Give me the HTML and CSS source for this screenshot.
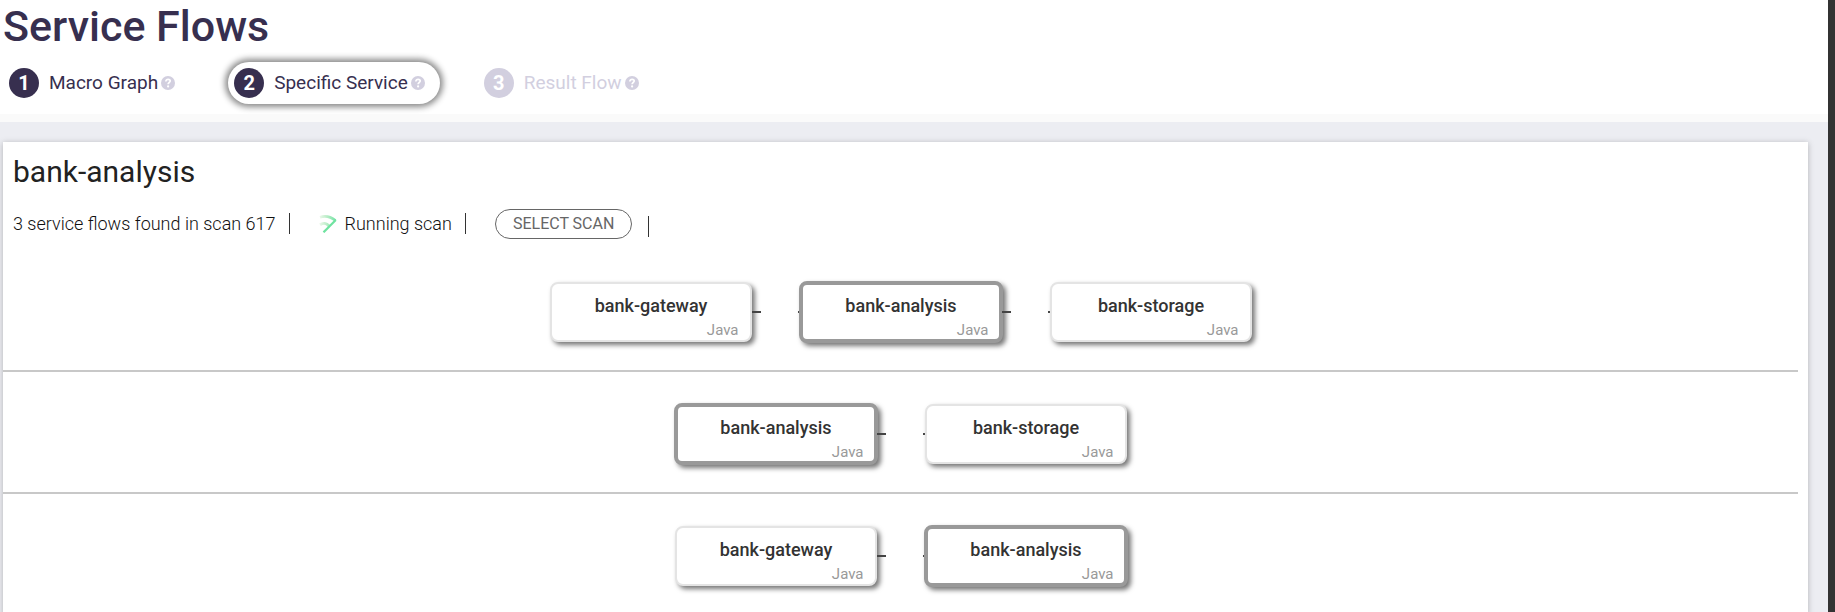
FILE: index.html
```html
<!DOCTYPE html>
<html lang="en">
<head>
<meta charset="utf-8">
<title>Service Flows</title>
<link rel="stylesheet" href="styles.css">
</head>
<body>
<svg class="defs" aria-hidden="true">
  <symbol id="help" viewBox="0 0 14 14">
    <circle cx="7" cy="7" r="7" fill="#d2cfdf"/>
    <path d="M4.9 5.4C4.9 4 5.8 3.3 7.1 3.3c1.2 0 2.1.7 2.1 1.8 0 1.4-2.1 1.5-2.1 3.1" fill="none" stroke="#fff" stroke-width="1.7"/>
    <circle cx="7.1" cy="10.4" r="1.1" fill="#fff"/>
  </symbol>
</svg>
<div class="app">
  <div class="page">
    <header class="header">
      <h1 class="title">Service Flows</h1>
      <nav class="steps">
        <button class="step" type="button"><span class="num">1</span><span>Macro Graph</span><svg class="help"><use href="#help"/></svg></button>
        <button class="step active" type="button"><span class="num">2</span><span>Specific Service</span><svg class="help"><use href="#help"/></svg></button>
        <button class="step disabled" type="button" disabled><span class="num">3</span><span>Result Flow</span><svg class="help"><use href="#help"/></svg></button>
      </nav>
    </header>
    <main class="card">
      <h2 class="service">bank-analysis</h2>
      <div class="toolbar">
        <span class="info">3 service flows found in scan 617</span>
        <span class="info running">
          <svg class="logo" viewBox="0 0 18 18" fill="none">
            <defs>
              <linearGradient id="fade" gradientUnits="userSpaceOnUse" x1="0" y1="0" x2="17" y2="0"><stop offset="0" stop-color="#8fd98f" stop-opacity=".15"/><stop offset="1" stop-color="#6fe3a6"/></linearGradient>
            </defs>
            <path d="M1 2.200C6 .6 12 2 16.500 5.500" stroke="url(#fade)" stroke-width="2.600"/>
            <path d="M1 9.800C4 7.600 7.500 8 10 11" stroke="url(#fade)" stroke-width="3"/>
            <path d="M16.800 5L4.500 17.300" stroke="#6fe3a0" stroke-width="2.200"/>
          </svg>
          Running scan
        </span>
        <button class="select" type="button">SELECT SCAN</button>
        <span class="bar"></span>
      </div>
      <ul class="flows">
        <li class="flow">
          <div class="node"><strong>bank-gateway</strong><span class="lang">Java</span></div>
          <span class="link"></span>
          <div class="node selected"><strong>bank-analysis</strong><span class="lang">Java</span></div>
          <span class="link"></span>
          <div class="node"><strong>bank-storage</strong><span class="lang">Java</span></div>
        </li>
        <li class="flow">
          <div class="node selected"><strong>bank-analysis</strong><span class="lang">Java</span></div>
          <span class="link"></span>
          <div class="node"><strong>bank-storage</strong><span class="lang">Java</span></div>
        </li>
        <li class="flow">
          <div class="node"><strong>bank-gateway</strong><span class="lang">Java</span></div>
          <span class="link"></span>
          <div class="node selected"><strong>bank-analysis</strong><span class="lang">Java</span></div>
        </li>
      </ul>
    </main>
  </div>
</div>
</body>
</html>
```
FILE: styles.css
```css
* { box-sizing: border-box; }
body { margin: 0; font-family: Roboto, "Liberation Sans", sans-serif; color: #333; }
button { font: inherit; color: inherit; background: none; border: 0; padding: 0; cursor: pointer; }
.defs { display: none; }
.app { min-height: 100vh; display: flex; border-right: 7px solid #333; background: #ecedf2; }
.page { flex: 1; display: flex; flex-direction: column; }
.header { background: #fff; border-bottom: 8px solid #fafafa; padding-bottom: 10px; }
.title { margin: 0; padding: 0 3px; height: 62px; font-size: 43px; line-height: 53px; font-weight: 500; color: #372f4f; }
.steps { display: flex; gap: 38px; padding-left: 3px; }
.step { display: flex; align-items: center; height: 42px; padding: 0 15px 0 6px; border-radius: 21px; font-size: 19px; line-height: 24px; color: #372f4f; }
.num { width: 30px; height: 30px; margin-right: 10px; border-radius: 50%; background: #372f4f; color: #fff; font-weight: 700; font-size: 20px; line-height: 30px; text-align: center; }
.help { width: 14px; height: 14px; margin-left: 3px; }
.active { box-shadow: 0 0 6px 3px #888; }
.disabled { color: #d2cfdf; }
.disabled .num { background: #d2cfdf; }
.card { flex: 1; margin: 20px 20px 0 3px; background: #fff; box-shadow: 0 1px 6px rgba(0, 0, 0, .25); }
.service { margin: 0; padding: 10px 10px 0; font-size: 30px; line-height: 40px; font-weight: 400; color: #222; }
.toolbar { display: flex; align-items: center; height: 58px; padding: 5px 10px 0; font-size: 18px; line-height: 21px; font-weight: 300; color: #111; }
.info { padding-right: 13px; border-right: 1px solid #333; }
.running { display: flex; align-items: center; margin-left: 29px; }
.logo { width: 18px; height: 18px; margin-right: 8px; }
.select { height: 30px; margin-left: 29px; padding: 0 17px; border: 1px solid #666; border-radius: 15px; font-size: 16px; font-weight: 400; color: #666; }
.bar { width: 1px; height: 21px; margin: 5px 0 0 16px; background: #333; }
.flows { list-style: none; margin: 0 10px 0 0; padding: 0; }
.flow { display: flex; justify-content: center; padding: 32px 0 28px; }
.flow + .flow { border-top: 2px solid #c8c8c8; }
.node { width: 202px; height: 60px; display: flex; flex-direction: column; border: 2px solid #e4e4e4; border-radius: 8px; background: #fff; box-shadow: 3px 3px 5px #777; padding: 11px 11px 0 12px; }
.node strong { font-size: 18px; line-height: 22px; font-weight: 500; text-align: center; }
.lang { font-size: 15px; line-height: 26px; text-align: right; color: #999; }
.selected { width: 204px; height: 62px; margin: -1px; border: 4px solid #999; padding: 10px 10px 0 11px; }
.link { width: 48px; height: 2px; margin-top: 29px; border: solid #444; border-width: 0 2px 0 9px; }
```
